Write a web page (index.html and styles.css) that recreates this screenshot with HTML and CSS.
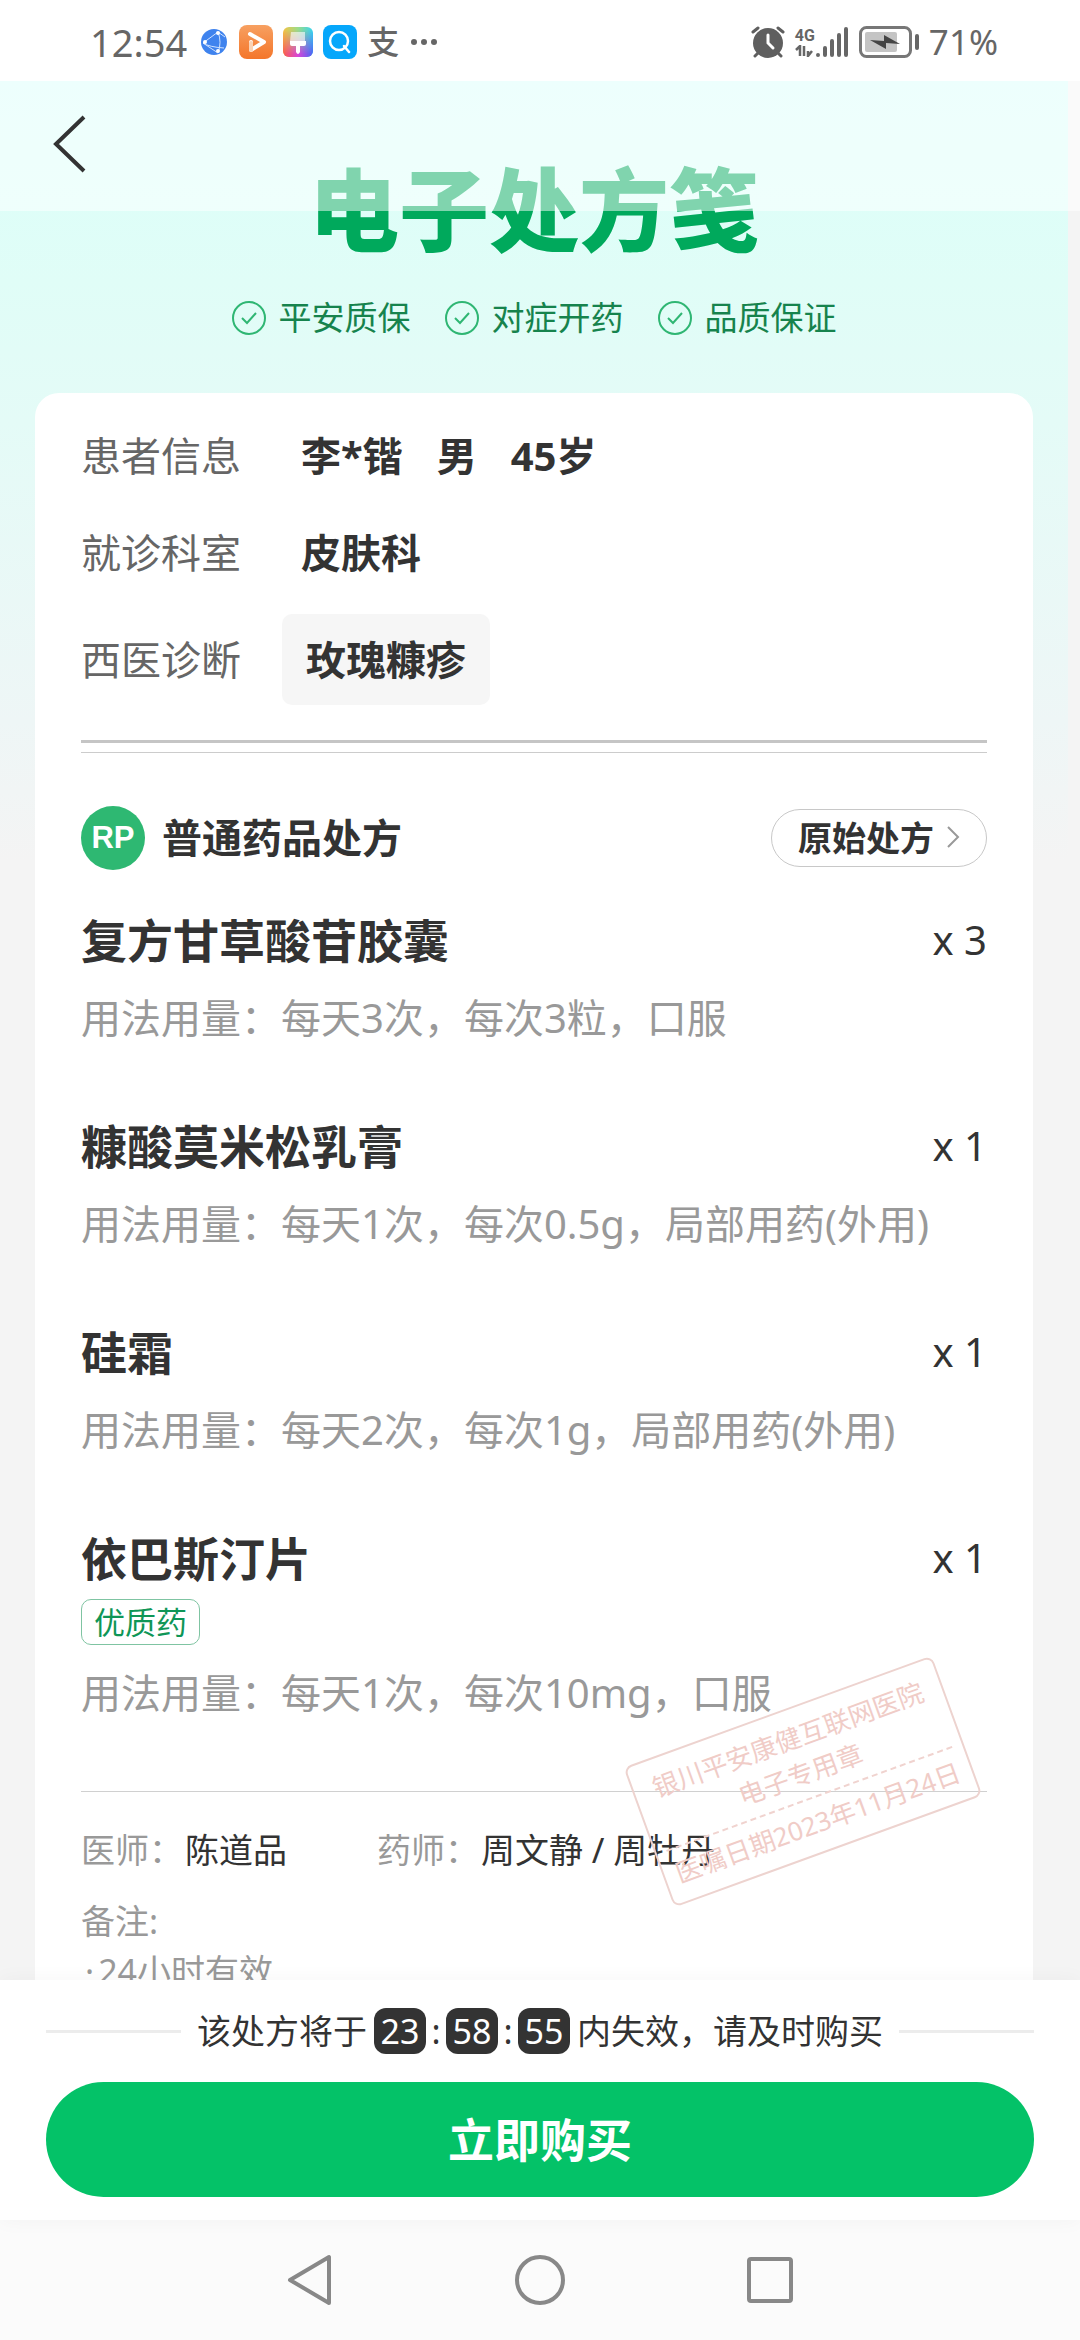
FILE: index.html
```
<!DOCTYPE html>
<html lang="zh-CN">
<head>
    <meta charset="UTF-8">
    <meta name="viewport" content="width=device-width, initial-scale=1.0">
    <title>电子处方笺</title>
    <link rel="stylesheet" href="styles.css">
</head>
<body>
    <div class="status-bar">
        <div class="status-left">
            <span class="time">12:54</span>
            <svg class="icon-globe" width="26" height="26" viewBox="0 0 26 26">
                <circle cx="13" cy="13" r="13" fill="#3f83ee"/>
                <path d="M2 14 L17 3 M2 14 L17 24 M17 3 Q21 13 17 24 M2 14 Q8 18 23 19 M17 3 L24 8" fill="none" stroke="#cfe2ff" stroke-width="1"/>
                <circle cx="17" cy="4" r="2" fill="#fff"/>
                <circle cx="4" cy="13" r="2" fill="#fff"/>
                <circle cx="17" cy="22" r="2" fill="#fff"/>
            </svg>
            <svg class="icon-video" width="34" height="34" viewBox="0 0 34 34">
                <defs>
                    <linearGradient id="orange" x1="0" y1="0" x2="0" y2="1">
                        <stop offset="0" stop-color="#f7a061"/>
                        <stop offset="1" stop-color="#f4762a"/>
                    </linearGradient>
                </defs>
                <rect width="34" height="34" rx="8" fill="url(#orange)"/>
                <path d="M11 9 L25 17 L12 25 L12 17" fill="none" stroke="#fff" stroke-width="4" stroke-linejoin="round" stroke-linecap="round"/>
                <path d="M12 18 V25" stroke="#fbd3b5" stroke-width="4" stroke-linecap="round"/>
            </svg>
            <svg class="icon-theme" width="30" height="30" viewBox="0 0 30 30">
                <defs>
                    <linearGradient id="rainbowTop" x1="0" y1="0" x2="1" y2="0">
                        <stop offset="0" stop-color="#f5c242"/>
                        <stop offset="0.5" stop-color="#9bdc8a"/>
                        <stop offset="1" stop-color="#36d3f2"/>
                    </linearGradient>
                    <linearGradient id="rainbowBottom" x1="0" y1="0" x2="1" y2="0">
                        <stop offset="0" stop-color="#fb5d4c"/>
                        <stop offset="0.5" stop-color="#d846d8"/>
                        <stop offset="1" stop-color="#4866f5"/>
                    </linearGradient>
                    <linearGradient id="fade" x1="0" y1="0" x2="0" y2="1">
                        <stop offset="0.1" stop-color="#000"/>
                        <stop offset="0.9" stop-color="#fff"/>
                    </linearGradient>
                    <mask id="fadeMask"><rect width="30" height="30" fill="url(#fade)"/></mask>
                </defs>
                <rect width="30" height="30" rx="6" fill="url(#rainbowTop)"/>
                <rect width="30" height="30" rx="6" fill="url(#rainbowBottom)" mask="url(#fadeMask)"/>
                <path d="M8 5 H22 V14 H7 Z" fill="#fff" opacity="0.6"/>
                <path d="M7 14 H23 V17 Q23 19 21 19 H17 V25 Q15 29 13 25 V19 H9 Q7 19 7 17 Z" fill="#fff"/>
            </svg>
            <svg class="icon-search" width="34" height="34" viewBox="0 0 34 34">
                <rect width="34" height="34" rx="8" fill="#06a7fb"/>
                <circle cx="16" cy="16" r="9" fill="none" stroke="#fff" stroke-width="2.5"/>
                <path d="M21 21 L26 27" stroke="#fff" stroke-width="2.5" stroke-linecap="round"/>
            </svg>
            <span class="pay">支</span>
            <svg width="26" height="6" viewBox="0 0 26 6" fill="#666">
                <circle cx="3" cy="3" r="3"/><circle cx="13" cy="3" r="3"/><circle cx="23" cy="3" r="3"/>
            </svg>
        </div>
        <div class="status-right">
            <svg class="icon-alarm" width="34" height="32" viewBox="0 0 34 32">
                <circle cx="17" cy="17" r="15" fill="#5f5f5f"/>
                <path d="M2 6 L7 2 M32 6 L27 2 M4 30 L8 26 M30 30 L26 26" stroke="#5f5f5f" stroke-width="3" stroke-linecap="round"/>
                <path d="M17 9 V17 L22 22" fill="none" stroke="#fff" stroke-width="3" stroke-linecap="round"/>
            </svg>
            <div class="network">
                <span>4G</span>
                <svg width="18" height="12" viewBox="0 0 18 12">
                    <path d="M1 5 L5 1 V11 M9 1 V11 M13 6 V11 L17 6" fill="none" stroke="#666" stroke-width="2.5"/>
                </svg>
            </div>
            <svg width="34" height="32" viewBox="0 0 34 32" stroke="#666" stroke-width="4" stroke-linecap="round">
                <path d="M3 29 V29 M10 22 V29 M17 15 V29 M24 9 V29 M31 3 V29"/>
            </svg>
            <svg class="icon-battery" width="60" height="32" viewBox="0 0 60 32">
                <rect x="1.5" y="1.5" width="50" height="29" rx="6" fill="none" stroke="#777" stroke-width="3"/>
                <rect x="6" y="6" width="32" height="20" rx="2" fill="#c4c4c4"/>
                <path d="M11 14 L25 15 V9 L41 18 L27 17 V23 Z" fill="#444"/>
                <rect x="56" y="8" width="4" height="16" rx="2" fill="#666"/>
            </svg>
            <span class="battery-text">71%</span>
        </div>
    </div>

    <main class="screen">
        <div class="top-nav">
            <button class="back" aria-label="返回">
                <svg width="36" height="58" viewBox="0 0 36 58">
                    <path d="M33 2 L5 29 L33 56" fill="none" stroke="#333" stroke-width="4"/>
                </svg>
            </button>
        </div>

        <div class="page">
            <h1 class="title">电子处方笺</h1>
            <ul class="features">
                <li>
                    <svg width="34" height="34" viewBox="0 0 34 34" fill="none" stroke="#2fb673" stroke-width="2"><circle cx="17" cy="17" r="16"/><path d="M10 17 L15 22 L24 12"/></svg>
                    平安质保
                </li>
                <li>
                    <svg width="34" height="34" viewBox="0 0 34 34" fill="none" stroke="#2fb673" stroke-width="2"><circle cx="17" cy="17" r="16"/><path d="M10 17 L15 22 L24 12"/></svg>
                    对症开药
                </li>
                <li>
                    <svg width="34" height="34" viewBox="0 0 34 34" fill="none" stroke="#2fb673" stroke-width="2"><circle cx="17" cy="17" r="16"/><path d="M10 17 L15 22 L24 12"/></svg>
                    品质保证
                </li>
            </ul>

            <div class="card">
                <dl class="info">
                    <div class="info-row">
                        <dt>患者信息</dt>
                        <dd><span>李*锴</span><span>男</span><span>45岁</span></dd>
                    </div>
                    <div class="info-row">
                        <dt>就诊科室</dt>
                        <dd>皮肤科</dd>
                    </div>
                    <div class="info-row">
                        <dt>西医诊断</dt>
                        <dd class="chip">玫瑰糠疹</dd>
                    </div>
                </dl>
                <div class="double-line"></div>

                <div class="rp-head">
                    <span class="rp">RP</span>
                    <h2>普通药品处方</h2>
                    <button class="origin">
                        原始处方
                        <svg width="14" height="24" viewBox="0 0 14 24"><path d="M2 2 L12 12 L2 22" fill="none" stroke="#999" stroke-width="2"/></svg>
                    </button>
                </div>

                <div class="drug">
                    <div class="drug-name"><h3>复方甘草酸苷胶囊</h3><span>x 3</span></div>
                    <p>用法用量：每天3次，每次3粒，口服</p>
                </div>
                <div class="drug">
                    <div class="drug-name"><h3>糠酸莫米松乳膏</h3><span>x 1</span></div>
                    <p>用法用量：每天1次，每次0.5g，局部用药(外用)</p>
                </div>
                <div class="drug">
                    <div class="drug-name"><h3>硅霜</h3><span>x 1</span></div>
                    <p>用法用量：每天2次，每次1g，局部用药(外用)</p>
                </div>
                <div class="drug">
                    <div class="drug-name"><h3>依巴斯汀片</h3><span>x 1</span></div>
                    <span class="tag">优质药</span>
                    <p>用法用量：每天1次，每次10mg，口服</p>
                </div>

                <div class="sign">
                    <div class="doctors">
                        <div>医师：<b>陈道品</b></div>
                        <div>药师：<b>周文静 / 周牡丹</b></div>
                    </div>
                    <div class="remark">
                        <p>备注:</p>
                        <ul>
                            <li><span>·</span>24小时有效</li>
                        </ul>
                    </div>
                    <div class="stamp">
                        <div>银川平安康健互联网医院</div>
                        <div>电子专用章</div>
                        <div class="stamp-date">医嘱日期2023年11月24日</div>
                    </div>
                </div>
            </div>
        </div>
    </main>

    <div class="buy-bar">
        <div class="countdown">
            <i></i>
            <div class="countdown-text">该处方将于<b>23</b><em>:</em><b>58</b><em>:</em><b>55</b>内失效，请及时购买</div>
            <i></i>
        </div>
        <button class="buy">立即购买</button>
    </div>

    <nav class="system-nav">
        <button aria-label="后退">
            <svg width="50" height="54" viewBox="0 0 50 54"><path d="M44 4 V50 L5 27 Z" fill="none" stroke="#888" stroke-width="4" stroke-linejoin="round"/></svg>
        </button>
        <button aria-label="主页">
            <svg width="50" height="54" viewBox="0 0 50 54"><circle cx="25" cy="27" r="23" fill="none" stroke="#888" stroke-width="4"/></svg>
        </button>
        <button aria-label="最近任务">
            <svg width="50" height="54" viewBox="0 0 50 54"><rect x="4" y="6" width="42" height="42" rx="2" fill="none" stroke="#888" stroke-width="4"/></svg>
        </button>
    </nav>
</body>
</html>
```

FILE: styles.css
```
* {
    box-sizing: border-box;
    margin: 0;
    padding: 0;
}
body {
    font-family: "Noto Sans", "Noto Sans CJK SC", sans-serif;
    display: flex;
    flex-direction: column;
    height: 100vh;
    overflow: hidden;
    background: #fff;
    color: #333;
}
button {
    font-family: inherit;
    background: none;
    border: none;
    color: inherit;
    cursor: pointer;
}
ul {
    list-style: none;
}
svg {
    display: block;
    flex: none;
}
/* status bar */
.status-bar {
    display: flex;
    justify-content: space-between;
    align-items: center;
    height: 81px;
    padding: 2px 82px 0 90px;
    color: #666;
    flex: none;
}
.status-left, .status-right {
    display: flex;
    align-items: center;
    gap: 10px;
}
.time {
    font-size: 38px;
    line-height: 44px;
    margin-right: 4px;
}
.icon-globe {
    margin-right: 2px;
}
.pay {
    font-size: 32px;
    line-height: 40px;
    font-weight: 500;
    margin-right: 2px;
}
.status-right {
    gap: 0;
}
.icon-alarm {
    margin-right: 10px;
}
.network {
    font-family: Roboto, sans-serif;
    font-size: 16px;
    line-height: 18px;
    font-weight: 700;
}
.icon-battery {
    margin: 0 10px;
}
.battery-text {
    font-size: 35px;
    line-height: 44px;
}
/* prescription */
.screen {
    position: relative;
    flex: 1;
    min-height: 0;
    overflow: hidden;
    background: #f4f4f4;
}
.top-nav {
    position: absolute;
    top: 0;
    left: 0;
    right: 0;
    z-index: 2;
    height: 130px;
    background: rgba(255, 255, 255, 0.5);
}
.back {
    margin: 34px 0 0 51px;
}
.page {
    margin-right: 12px;
    padding: 83px 35px 0;
    background: linear-gradient(#dbfffa 0, #e0fdf7 200px, #e4fbf7 340px, #eef6f6 640px, #f4f4f4 780px);
}
.title {
    font-size: 90px;
    line-height: 90px;
    font-weight: 900;
    text-align: center;
    color: #00a95c;
}
.features {
    display: flex;
    justify-content: center;
    gap: 34px;
    margin: 47px 0 58px;
}
.features li {
    display: flex;
    align-items: center;
    gap: 13px;
    font-size: 33px;
    line-height: 34px;
    color: #16834d;
}
.card {
    padding: 14px 46px 40px;
    background: #fff;
    border-radius: 24px;
}
.info-row {
    display: flex;
    align-items: center;
    min-height: 97px;
    font-size: 40px;
    line-height: 52px;
}
.info-row dt {
    width: 201px;
    color: #666;
}
.info-row dd {
    display: flex;
    gap: 34px;
    padding-left: 19px;
    font-weight: 700;
}
.info-row .chip {
    margin: 13px 0;
    padding: 20px 24px;
    line-height: 51px;
    background: #f6f6f6;
    border-radius: 10px;
}
.double-line {
    height: 13px;
    margin-top: 22px;
    border-top: 3px solid #c5c5c5;
    border-bottom: 1px solid #ccc;
}
.rp-head {
    display: flex;
    align-items: center;
    margin: 53px 0 40px;
}
.rp {
    width: 64px;
    height: 64px;
    border-radius: 50%;
    background: #2eb872;
    color: #fff;
    font-family: "Liberation Sans", sans-serif;
    font-size: 31px;
    line-height: 64px;
    font-weight: 700;
    text-align: center;
}
.rp-head h2 {
    flex: 1;
    margin-left: 17px;
    font-size: 40px;
    line-height: 60px;
    font-weight: 700;
}
.origin {
    display: flex;
    align-items: center;
    gap: 12px;
    height: 58px;
    padding: 0 26px 3px;
    border: 1px solid #c8c8c8;
    border-radius: 29px;
    font-size: 34px;
    font-weight: 700;
}
.drug {
    margin-bottom: 68px;
}
.drug-name {
    display: flex;
    justify-content: space-between;
    font-size: 40px;
    line-height: 60px;
}
.drug-name h3 {
    font-size: 46px;
    font-weight: 700;
}
.drug p {
    margin-top: 18px;
    font-size: 40px;
    line-height: 60px;
    color: #999;
}
.tag {
    display: block;
    width: fit-content;
    margin-top: 11px;
    padding: 0 12px;
    border: 1px solid #7fc4a2;
    border-radius: 10px;
    font-size: 31px;
    line-height: 44px;
    color: #0f9657;
}
.sign {
    position: relative;
    padding-top: 33px;
    border-top: 1px solid #d0d0d0;
    font-size: 34px;
    line-height: 50px;
    color: #999;
}
.doctors {
    display: flex;
    gap: 90px;
}
.doctors b {
    margin-left: 2px;
    font-weight: 400;
    color: #333;
}
.remark {
    margin-top: 21px;
}
.remark li {
    display: flex;
    gap: 4px;
    padding-left: 4px;
}
.stamp {
    position: absolute;
    top: -85px;
    right: 20px;
    width: 328px;
    padding: 10px;
    border: 2px solid #edd3cf;
    border-radius: 8px;
    transform: rotate(-20deg);
    font-size: 26px;
    line-height: 37px;
    text-align: center;
    white-space: nowrap;
    color: #f0ccc7;
}
.stamp-date {
    margin-top: 6px;
    padding-top: 6px;
    border-top: 2px dashed #f0d3cf;
}
/* bottom */
.buy-bar {
    position: relative;
    padding: 26px 46px 23px;
    background: #fff;
    box-shadow: 0 0 20px rgba(0, 0, 0, 0.04);
    flex: none;
}
.countdown {
    display: flex;
    align-items: center;
    gap: 16px;
    margin-bottom: 26px;
}
.countdown i {
    flex: 1;
    height: 3px;
    background: #ececec;
}
.countdown-text {
    display: flex;
    align-items: center;
    font-size: 34px;
    line-height: 50px;
}
.countdown b {
    width: 52px;
    margin: 0 0 0 7px;
    border-radius: 12px;
    background: #333;
    color: #fff;
    font-weight: 400;
    line-height: 46px;
    text-align: center;
}
.countdown em {
    width: 20px;
    font-style: normal;
    text-align: center;
}
.countdown em + b {
    margin-left: 0;
}
.countdown b:last-of-type {
    margin-right: 7px;
}
.buy {
    display: block;
    width: 100%;
    height: 115px;
    padding-bottom: 6px;
    border-radius: 58px;
    background: #04c268;
    color: #fff;
    font-size: 46px;
    font-weight: 700;
}
.system-nav {
    display: flex;
    justify-content: center;
    align-items: center;
    gap: 180px;
    height: 120px;
    background: #fbfbfb;
    flex: none;
}
```
